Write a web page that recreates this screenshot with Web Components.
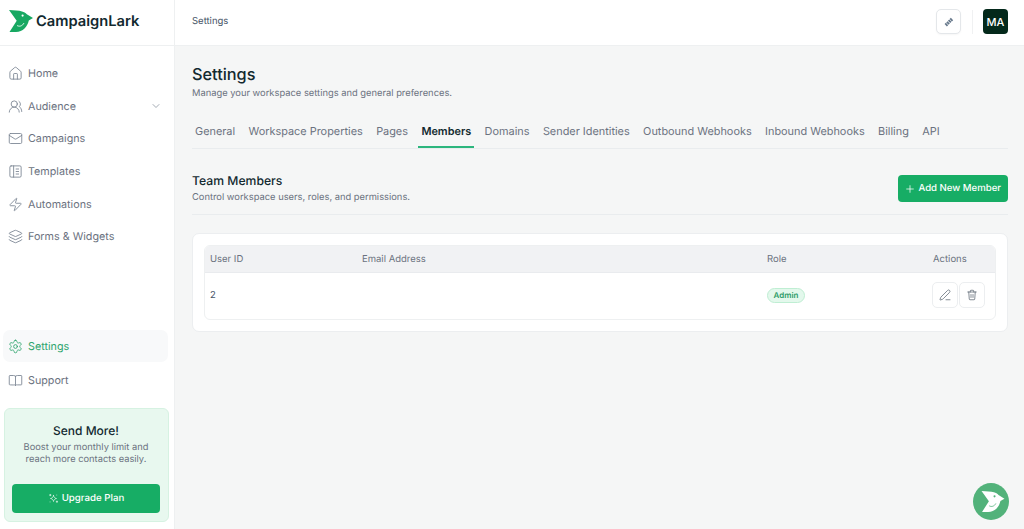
<!DOCTYPE html>
<html lang="en"><head><meta charset="utf-8"><title>Settings</title>
<style>
html,body{margin:0;padding:0;height:100%}
body{font-family:Inter,"Liberation Sans",sans-serif;background:#f5f6f6;overflow:hidden;text-rendering:geometricPrecision}
</style></head><body>
<cl-app></cl-app>
<script>
const ICONS={
home:'<path d="M15 21v-8a1 1 0 0 0-1-1h-4a1 1 0 0 0-1 1v8"/><path d="M3 10a2 2 0 0 1 .709-1.528l7-5.999a2 2 0 0 1 2.582 0l7 5.999A2 2 0 0 1 21 10v9a2 2 0 0 1-2 2H5a2 2 0 0 1-2-2z"/>',
users:'<path d="M18 21a8 8 0 0 0-16 0"/><circle cx="10" cy="8" r="5"/><path d="M22 20c0-3.370-2-6.500-4-8a5 5 0 0 0-.45-8.300"/>',
chev:'<path d="m6 9 6 6 6-6"/>',
mail:'<rect x="2" y="4" width="20" height="16" rx="2"/><path d="m22 7-8.970 5.700a1.940 1.940 0 0 1-2.060 0L2 7"/>',
tpl:'<rect x="3" y="3" width="18" height="18" rx="2"/><path d="M9 3v18"/><path d="M13 8h4M13 12h4M13 16h4"/>',
bolt:'<path d="M4 14a1 1 0 0 1-.78-1.630l9.900-10.200a.5.5 0 0 1 .86.46l-1.920 6.020A1 1 0 0 0 13 10h7a1 1 0 0 1 .78 1.630l-9.900 10.200a.5.5 0 0 1-.86-.46l1.920-6.020A1 1 0 0 0 11 14z"/>',
layers:'<path d="M12.830 2.180a2 2 0 0 0-1.660 0L2.600 6.080a1 1 0 0 0 0 1.830l8.580 3.910a2 2 0 0 0 1.660 0l8.580-3.900a1 1 0 0 0 0-1.830z"/><path d="M2 12a1 1 0 0 0 .58.910l8.600 3.910a2 2 0 0 0 1.650 0l8.580-3.900A1 1 0 0 0 22 12"/><path d="M2 17a1 1 0 0 0 .58.910l8.600 3.910a2 2 0 0 0 1.650 0l8.580-3.900A1 1 0 0 0 22 17"/>',
gear:'<path d="M12.220 2h-.44a2 2 0 0 0-2 2v.18a2 2 0 0 1-1 1.730l-.43.25a2 2 0 0 1-2 0l-.15-.08a2 2 0 0 0-2.730.73l-.22.38a2 2 0 0 0 .73 2.730l.15.1a2 2 0 0 1 1 1.720v.51a2 2 0 0 1-1 1.740l-.15.09a2 2 0 0 0-.73 2.730l.22.38a2 2 0 0 0 2.730.73l.15-.08a2 2 0 0 1 2 0l.43.25a2 2 0 0 1 1 1.730V20a2 2 0 0 0 2 2h.44a2 2 0 0 0 2-2v-.18a2 2 0 0 1 1-1.730l.43-.25a2 2 0 0 1 2 0l.15.08a2 2 0 0 0 2.730-.73l.22-.39a2 2 0 0 0-.73-2.730l-.15-.08a2 2 0 0 1-1-1.740v-.5a2 2 0 0 1 1-1.740l.15-.09a2 2 0 0 0 .73-2.730l-.22-.38a2 2 0 0 0-2.730-.73l-.15.08a2 2 0 0 1-2 0l-.43-.25a2 2 0 0 1-1-1.730V4a2 2 0 0 0-2-2z"/><circle cx="12" cy="12" r="3"/>',
book:'<path d="M12 5v15"/><path d="M3 19a1 1 0 0 1-1-1V5a1 1 0 0 1 1-1h6a3 3 0 0 1 3 2 3 3 0 0 1 3-2h6a1 1 0 0 1 1 1v13a1 1 0 0 1-1 1h-6a3 3 0 0 0-3 1 3 3 0 0 0-3-1z"/>',
spark:'<path d="M12 5.500c.7 3.700 2.800 5.800 6.500 6.500-3.700.7-5.800 2.800-6.500 6.500-.7-3.700-2.800-5.800-6.500-6.500 3.700-.7 5.800-2.800 6.500-6.500z"/><path d="M5 3v3M3.500 4.500h3M19.500 17.500v3M18 19h3M19 4.500v.01M4.500 19.500v.01"/>',
plus:'<path d="M12 4v16M4 12h16"/>',
pen:'<path d="M21.170 6.810a2.800 2.800 0 0 0-3.980-3.980L3.840 16.170a2 2 0 0 0-.5.830l-1.320 4.350a.5.5 0 0 0 .62.62l4.350-1.320a2 2 0 0 0 .83-.5z"/><path d="M14 21.500h8"/>',
trash:'<path d="M3.500 6h17"/><path d="M8.500 6V4a1.500 1.500 0 0 1 1.500-1.500h4A1.500 1.500 0 0 1 15.500 4v2"/><path d="M5.500 6l1 14a1.500 1.500 0 0 0 1.500 1.500h8a1.500 1.500 0 0 0 1.500-1.500l1-14"/><path d="M10 11v6M14 11v6"/>',
wand:'<path d="M5.500 18.500 18.500 5.500" stroke-width="6.500" stroke-dasharray="3.600 1.100" stroke-linecap="butt"/>'
};
const BIRD='<path d="M0 0C5 .3 10 .5 13 1.400 15 1.900 16.500 2.800 17.800 4.200L24 8l-4.200 2.500C18.500 16.500 14 22 7 22H.5l7.200-11.300z"/>';
function def(name,css,html){
  customElements.define(name,class extends HTMLElement{
    connectedCallback(){
      if(this.shadowRoot)return;
      const r=this.attachShadow({mode:'open'});
      r.innerHTML='<style>'+css+'</style>'+(typeof html==='function'?html(this):html);
    }
  });
}
def('cl-icon',':host{display:inline-flex;flex:none;width:var(--s,13px);height:var(--s,13px)}svg{width:100%;height:100%;fill:none;stroke:currentColor;stroke-width:var(--w,1.700);stroke-linecap:round;stroke-linejoin:round}',
  h=>`<svg viewBox="0 0 24 24" aria-hidden="true">${ICONS[h.getAttribute('name')]||''}</svg>`);
def('cl-brand',':host{display:flex;align-items:center;gap:3px;height:46px;box-sizing:border-box;padding:0 0 3px 9px;margin-right:-1px;border-bottom:1px solid #eef0f1;font-size:14.700px;font-weight:600;color:#12292f}svg{width:24px;height:22px;fill:#17a862;flex:none}.e{fill:#fff}.s{fill:none;stroke:#fff;stroke-width:.8}',
  `<svg viewBox="0 0 24 22">${BIRD}<circle class="e" cx="13.600" cy="5.600" r="1.100"/><path class="s" d="M8 15.500C10.500 17 13.500 16 15 13"/></svg><span>CampaignLark</span>`);
def('cl-nav',':host{display:flex;align-items:center;gap:5px;height:32.600px;margin:0 5px 0 3px;padding:0 6px 0 5px;box-sizing:border-box;font-size:10.750px;color:#6b7280;border-radius:7px;--s:15px;--w:1.400}:host([active]){background:#f8f9fa;color:#2fa56e;height:32px}.i{color:#7c8694;display:flex}:host([active]) .i{color:#2fa56e}.t{flex:1;white-space:nowrap}.c{color:#7c8694;display:flex;--s:12px}',
  h=>`<span class="i"><cl-icon name="${h.getAttribute('icon')}"></cl-icon></span><span class="t"><slot></slot></span>${h.hasAttribute('chevron')?'<span class="c"><cl-icon name="chev"></cl-icon></span>':''}`);
def('cl-upgrade',':host{display:flex;flex-direction:column;align-items:center;margin:0 4px 0 4px;height:114px;box-sizing:border-box;background:#e8f8ef;border:1px solid #d6f2e2;border-radius:6px;padding:14px 8px 8px 7px;text-align:center}h3{margin:0;font-size:12px;font-weight:500;color:#12292f;line-height:16px}p{margin:3px 0 0;font-size:9.300px;line-height:11.500px;color:#6b7280}button{margin-top:auto;width:100%;height:29px;background:#17ad65;border:0;border-radius:4px;color:#fff;font:500 9.700px Inter,sans-serif;text-rendering:geometricPrecision;display:flex;align-items:center;justify-content:center;gap:3px;--s:11px;--w:1.400}',
  `<h3>Send More!</h3><p>Boost your monthly limit and reach more contacts easily.</p><button><cl-icon name="spark"></cl-icon>Upgrade Plan</button>`);
def('cl-sidebar',':host{display:flex;flex-direction:column;width:175px;flex:none;background:#fff;border-right:1px solid #eef0f1;box-sizing:border-box;height:529px;padding:0 1px 7px 0}.nav{padding-top:11.400px}.sp{flex:1}.b{margin-bottom:11.500px}.a{margin-bottom:1.500px}',
  `<cl-brand></cl-brand><div class="nav">
  <cl-nav icon="home">Home</cl-nav><cl-nav icon="users" chevron>Audience</cl-nav><cl-nav icon="mail">Campaigns</cl-nav><cl-nav icon="tpl">Templates</cl-nav><cl-nav icon="bolt">Automations</cl-nav><cl-nav icon="layers">Forms &amp; Widgets</cl-nav></div>
  <div class="sp"></div><cl-nav class="a" icon="gear" active>Settings</cl-nav><cl-nav class="b" icon="book">Support</cl-nav><cl-upgrade></cl-upgrade>`);
def('cl-topbar',':host{display:flex;align-items:center;height:46px;box-sizing:border-box;background:#fff;border-bottom:1px solid #eef0f1;padding:0 16px 2px 17px;font-size:9.500px;color:#475467}.t{flex:1}.w{width:25px;height:25px;box-sizing:border-box;border:1px solid #e4e7ea;border-radius:5px;display:flex;align-items:center;justify-content:center;color:#65778a;--s:12px;box-shadow:0 1px 2px #0000000a;background:#fff}.d{width:1px;height:24px;background:#f0f1f2;margin:0 10px 0 11px}.a{width:25px;height:25px;border-radius:4px;background:#04291b;color:#fff;font-size:11px;font-weight:500;display:flex;align-items:center;justify-content:center}',
  `<span class="t">Settings</span><span class="w"><cl-icon name="wand"></cl-icon></span><span class="d"></span><span class="a">MA</span>`);
def('cl-tab',':host{display:block;padding:0 3px;height:100%;box-sizing:border-box;line-height:33px;font-size:10.900px;color:#6b7280;white-space:nowrap;border-bottom:2px solid transparent}:host([active]){color:#12292f;font-weight:600;border-bottom-color:#2cb67d}','<slot></slot>');
def('cl-tabs',':host{display:flex;gap:7.400px;height:33px;border-bottom:1px solid #e9ecee;margin-top:15px}','<slot></slot>');
def('cl-head',':host{display:block;color:#12292f}h1{margin:0;font-size:16.300px;font-weight:500;line-height:20px}p{margin:4px 0 0;font-size:9.350px;line-height:12px;color:#6b7280}','<h1>Settings</h1><p>Manage your workspace settings and general preferences.</p>');
def('cl-button',':host{display:flex;align-items:center;gap:3px;height:27px;padding:0 7px;background:#17ad65;border-radius:4px;color:#fff;font-size:9.600px;font-weight:500;--s:10px;--w:1.800;white-space:nowrap}','<cl-icon name="plus"></cl-icon><slot></slot>');
def('cl-section',':host{display:flex;align-items:center;justify-content:space-between;padding:24px 0 10px;border-bottom:1px solid #e9ecee}h2{margin:0;font-size:12.200px;font-weight:500;line-height:16px;color:#12292f}p{margin:3px 0 0;font-size:9.350px;line-height:12px;color:#6b7280}','<div><h2>Team Members</h2><p>Control workspace users, roles, and permissions.</p></div><cl-button>Add New Member</cl-button>');
def('cl-badge',':host{display:inline-flex;align-items:center;height:15px;padding:0 5.500px;box-sizing:border-box;border:1px solid #bfeed3;background:#e3f8ec;border-radius:8px;font-size:8px;font-weight:600;color:#2d9c68}','<slot></slot>');
def('cl-iconbtn',':host{display:flex;align-items:center;justify-content:center;width:26px;height:26px;box-sizing:border-box;border:1px solid #eceef0;border-radius:5px;background:#fff;color:#5b6672;--s:12px;--w:1.500}',h=>`<cl-icon name="${h.getAttribute('icon')}"></cl-icon>`);
def('cl-table',':host{display:block;background:#fff;border:1px solid #eceef0;border-radius:7px;padding:11px;margin-top:18px}.g{border:1px solid #eef0f1;border-radius:6px;overflow:hidden}.r{display:grid;grid-template-columns:152px 405px 166px 1fr;align-items:center;padding:0 5px;font-size:9.500px;color:#6b7280}.h{height:27px;box-sizing:border-box;background:#f1f2f4;border-bottom:1px solid #e9ebee}.b{height:46px;box-sizing:border-box;padding-bottom:2px;color:#475467}.ac{display:flex;gap:1px;justify-content:flex-start;margin-left:-1px}',
  `<div class="g"><div class="r h"><span>User ID</span><span>Email Address</span><span>Role</span><span>Actions</span></div><div class="r b"><span>2</span><span></span><span><cl-badge>Admin</cl-badge></span><span class="ac"><cl-iconbtn icon="pen"></cl-iconbtn><cl-iconbtn icon="trash"></cl-iconbtn></span></div></div>`);
def('cl-fab',':host{position:fixed;right:15px;bottom:9px;width:36px;height:37px;border-radius:50%;background:#52b27a;display:flex;align-items:center;justify-content:center}svg{width:24px;height:21px;fill:#fff;margin-left:3px}.e{fill:#52b27a}.s{fill:none;stroke:#52b27a;stroke-width:.8}',
  `<svg viewBox="0 0 24 22">${BIRD}<circle class="e" cx="13.600" cy="5.600" r="1.100"/><path class="s" d="M8 15.500C10.500 17 13.500 16 15 13"/></svg>`);
def('cl-app',':host{display:flex;height:529px;width:1024px}.m{flex:1;min-width:0;margin-left:-1px}.c{padding:18px 16px 0 18px}cl-topbar{margin-left:1px}',
  `<cl-sidebar></cl-sidebar><div class="m"><cl-topbar></cl-topbar><div class="c"><cl-head></cl-head><cl-tabs><cl-tab>General</cl-tab><cl-tab>Workspace Properties</cl-tab><cl-tab>Pages</cl-tab><cl-tab active>Members</cl-tab><cl-tab>Domains</cl-tab><cl-tab>Sender Identities</cl-tab><cl-tab>Outbound Webhooks</cl-tab><cl-tab>Inbound Webhooks</cl-tab><cl-tab>Billing</cl-tab><cl-tab>API</cl-tab></cl-tabs><cl-section></cl-section><cl-table></cl-table></div></div><cl-fab></cl-fab>`);
</script></body></html>
